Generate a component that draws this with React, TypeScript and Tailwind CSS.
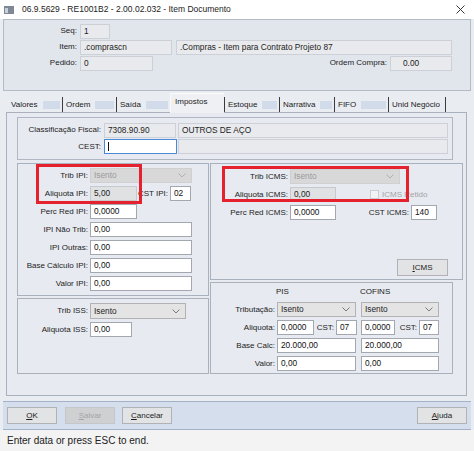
import React from "react";

type Kind = "white" | "ro" | "dis" | "focus";

const fieldKinds: Record<Kind, string> = {
  white: "bg-white border-[#a3a8b0] text-[#111]",
  ro: "bg-[#e9eaed] border-[#cdd1d7] text-[#222]",
  dis: "bg-[#e0e1e3] border-[#c6c9ce] text-[#222]",
  focus: "bg-white border-[#4a8ad4] text-[#111]",
};

function Field({
  v = "",
  kind = "white",
  className = "",
  children,
}: {
  v?: string;
  kind?: Kind;
  className?: string;
  children?: React.ReactNode;
}) {
  return (
    <div
      className={`h-[15px] border flex items-center pl-[3px] text-[8.3px] leading-none whitespace-nowrap overflow-hidden shrink-0 ${fieldKinds[kind]} ${className}`}
    >
      {v}
      {children}
    </div>
  );
}

function Chevron({ color }: { color: string }) {
  return (
    <svg width="8" height="5" viewBox="0 0 8 5" className="ml-auto mr-[5px] shrink-0">
      <path d="M0.5 0.5 L4 4 L7.5 0.5" fill="none" stroke={color} strokeWidth="1" />
    </svg>
  );
}

function Select({
  v,
  disabled = false,
  className = "",
}: {
  v: string;
  disabled?: boolean;
  className?: string;
}) {
  return (
    <div
      className={`h-[15px] border flex items-center pl-[3px] text-[8.3px] leading-none whitespace-nowrap shrink-0 ${
        disabled
          ? "bg-[#d8d8d9] border-[#d0d0d2] text-[#9a9a9a]"
          : "bg-[#e4e4e5] border-[#b2b2b4] text-[#1e1e1e]"
      } ${className}`}
    >
      {v}
      <Chevron color={disabled ? "#b0b0b0" : "#7a7a7a"} />
    </div>
  );
}

function Lbl({ t, className = "" }: { t: string; className?: string }) {
  return (
    <span
      className={`text-right text-[8px] leading-none whitespace-nowrap shrink-0 text-[#1c1c1c] ${className}`}
    >
      {t}
    </span>
  );
}

function Btn({
  first,
  rest,
  disabled = false,
  className = "",
}: {
  first: string;
  rest: string;
  disabled?: boolean;
  className?: string;
}) {
  return (
    <div
      className={`h-[17px] w-[50px] border flex items-center justify-center text-[8px] leading-none shrink-0 ${
        disabled
          ? "bg-[#cfd0d2] border-[#c4c6c9] text-[#a3a5a8]"
          : "bg-[#e2e3e5] border-[#b0b2b6] text-[#1c1c1c]"
      } ${className}`}
    >
      <span className="underline">{first}</span>
      {rest}
    </div>
  );
}

const tabs = [
  { t: "Valores", w: "w-[54px]", sep: false },
  { t: "Ordem", w: "w-[54px]", sep: true },
  { t: "Saída", w: "w-[54px]", sep: true },
  { t: "Impostos", w: "w-[54px]", sel: true },
  { t: "Estoque", w: "w-[55px]", sep: true },
  { t: "Narrativa", w: "w-[55px]", sep: true },
  { t: "FIFO", w: "w-[54px]", sep: true },
  { t: "Unid Negócio", w: "w-[58px]", sep: true, last: true },
];

export default function App() {
  return (
    <div className="relative w-[474px] h-[451px] overflow-hidden bg-[#e9ecf1] font-['Liberation_Sans',Arial,sans-serif] text-[#1b1b1b]">
      {/* Title bar */}
      <div className="h-[19px] bg-white flex items-center">
        <svg className="ml-[4px] shrink-0" width="10" height="8" viewBox="0 0 10 8">
          <rect x="0" y="0" width="10" height="8" fill="#7f8896" />
          <rect x="1" y="2" width="3" height="5" fill="#c9cfd8" />
        </svg>
        <span className="ml-[8px] text-[8.5px] leading-none text-[#222]">
          06.9.5629 - RE1001B2 - 2.00.02.032 - Item Documento
        </span>
        <svg className="ml-auto mr-[9px]" width="9" height="9" viewBox="0 0 9 9">
          <path d="M0.5 0.5L8.5 8.5M8.5 0.5L0.5 8.5" stroke="#3a3a3a" strokeWidth="1" />
        </svg>
      </div>

      {/* Header panel */}
      <div className="ml-[3px] w-[468px] h-[72px] border border-[#b4bbc6] bg-[#e1e5ec] pt-[4px] flex flex-col gap-[2px]">
        <div className="flex items-center h-[14px]">
          <Lbl t="Seq:" className="w-[73px]" />
          <Field kind="ro" v="1" className="ml-[3px] w-[30px] h-[14px]" />
        </div>
        <div className="flex items-center h-[14px]">
          <Lbl t="Item:" className="w-[73px]" />
          <Field kind="ro" v=".comprascn" className="ml-[3px] w-[92px] h-[14px]" />
          <Field kind="ro" v=".Compras - Item para Contrato Projeto 87" className="ml-[4px] w-[276px] h-[14px]" />
        </div>
        <div className="flex items-center h-[14px]">
          <Lbl t="Pedido:" className="w-[73px]" />
          <Field kind="ro" v="0" className="ml-[3px] w-[73px] h-[14px]" />
          <Lbl t="Ordem Compra:" className="w-[234px]" />
          <Field kind="ro" v="0.00" className="ml-[3px] w-[62px] h-[14px] pl-[12px]" />
        </div>
      </div>

      {/* Tabs */}
      <div className="mt-[2px] ml-[8px] flex items-start h-[20px] -mb-[1px] relative z-10">
        {tabs.map((tb) =>
          tb.sel ? (
            <div
              key={tb.t}
              className={`${tb.w} h-[20px] bg-[#eef0f3] border-l border-t border-[#fbfbfc] flex items-start pt-[4px] pl-[4px] text-[8px] leading-none shrink-0`}
            >
              <span>{tb.t}</span>
            </div>
          ) : (
            <div
              key={tb.t}
              className={`${tb.w} mt-[4px] h-[15px] flex items-center overflow-hidden whitespace-nowrap shrink-0 ${
                tb.sep ? "border-l border-[#3b3b3b]" : ""
              } ${tb.last ? "border-r" : ""}`}
            >
              <span className="pl-[3px] text-[8px] leading-none">{tb.t}</span>
              {!tb.last && <span className="flex-1 h-[8px] bg-[#d2dbea] ml-[5px] mr-[2px]" />}
            </div>
          )
        )}
      </div>

      {/* Tab panel */}
      <div className="ml-[6px] w-[461px] h-[284px] border border-[#a9b1bd] bg-[#e7eaf0]">
        {/* Classificacao */}
        <div className="ml-[10px] mt-[4px] w-[436px] h-[43px] border border-[#b0b7c2] pt-[5px] flex flex-col gap-[2px]">
          <div className="flex items-center h-[14px]">
            <Lbl t="Classificação Fiscal:" className="w-[83px]" />
            <Field kind="ro" v="7308.90.90" className="ml-[3px] w-[72px] h-[14px]" />
            <Field kind="ro" v="OUTROS DE AÇO" className="ml-[2px] w-[270px] h-[14px]" />
          </div>
          <div className="flex items-center h-[15px]">
            <Lbl t="CEST:" className="w-[83px]" />
            <Field kind="focus" className="ml-[3px] w-[73px]">
              <span className="w-[1px] h-[9px] bg-[#111]" />
            </Field>
            <Field kind="ro" className="ml-[1px] w-[270px]" />
          </div>
        </div>

        {/* Groups */}
        <div className="ml-[10px] mt-[3px] flex gap-[1px]">
          {/* Left column */}
          <div className="w-[192px] flex flex-col gap-[2px]">
            <div className="h-[133px] border border-[#a9b1bd] pt-[4px] flex flex-col gap-[3px]">
              <div className="flex items-center h-[15px]">
                <Lbl t="Trib IPI:" className="w-[70px]" />
                <Select v="Isento" disabled className="ml-[2px] w-[102px]" />
              </div>
              <div className="flex items-center h-[15px]">
                <Lbl t="Aliquota IPI:" className="w-[70px]" />
                <Field kind="dis" v="5,00" className="ml-[2px] w-[47px]" />
                <Lbl t="CST IPI:" className="w-[31px]" />
                <Field v="02" className="ml-[2px] w-[21px]" />
              </div>
              <div className="flex items-center h-[15px]">
                <Lbl t="Perc Red IPI:" className="w-[70px]" />
                <Field v="0,0000" className="ml-[2px] w-[47px]" />
              </div>
              <div className="flex items-center h-[15px]">
                <Lbl t="IPI Não Trib:" className="w-[70px]" />
                <Field v="0,00" className="ml-[2px] w-[102px]" />
              </div>
              <div className="flex items-center h-[15px]">
                <Lbl t="IPI Outras:" className="w-[70px]" />
                <Field v="0,00" className="ml-[2px] w-[102px]" />
              </div>
              <div className="flex items-center h-[15px]">
                <Lbl t="Base Cálculo IPI:" className="w-[70px]" />
                <Field v="0,00" className="ml-[2px] w-[102px]" />
              </div>
              <div className="flex items-center h-[15px]">
                <Lbl t="Valor IPI:" className="w-[70px]" />
                <Field v="0,00" className="ml-[2px] w-[102px]" />
              </div>
            </div>
            <div className="h-[76px] border border-[#a9b1bd] pt-[4px] flex flex-col gap-[3px]">
              <div className="flex items-center h-[16px]">
                <Lbl t="Trib ISS:" className="w-[70px]" />
                <Select v="Isento" className="ml-[2px] w-[96px] h-[16px]" />
              </div>
              <div className="flex items-center h-[15px]">
                <Lbl t="Aliquota ISS:" className="w-[70px]" />
                <Field v="0,00" className="ml-[2px] w-[42px]" />
              </div>
            </div>
          </div>

          {/* Right column */}
          <div className="w-[253px] flex flex-col gap-[2px]">
            <div className="h-[117px] border border-[#a9b1bd] pt-[5px] flex flex-col">
              <div className="flex items-center h-[15px]">
                <Lbl t="Trib ICMS:" className="w-[77px]" />
                <Select v="Isento" disabled className="ml-[2px] w-[110px]" />
              </div>
              <div className="flex items-center h-[15px] mt-[3px]">
                <Lbl t="Aliquota ICMS:" className="w-[77px]" />
                <Field kind="dis" v="0,00" className="ml-[2px] w-[46px]" />
                <span className="ml-[34px] w-[9px] h-[9px] border border-[#cbced3] bg-[#f2f3f5] shrink-0" />
                <span className="ml-[3px] text-[8px] leading-none text-[#a2a4a8] whitespace-nowrap">ICMS Retido</span>
              </div>
              <div className="flex items-center h-[15px] mt-[3px]">
                <Lbl t="Perc Red ICMS:" className="w-[77px]" />
                <Field v="0,0000" className="ml-[2px] w-[46px]" />
                <Lbl t="CST ICMS:" className="w-[73px]" />
                <Field v="140" className="ml-[2px] w-[26px]" />
              </div>
              <div className="flex justify-end mr-[14px] mt-[39px]">
                <Btn first="I" rest="CMS" className="w-[51px]" />
              </div>
            </div>
            <div className="w-[243px] h-[92px] border border-[#a9b1bd] pt-[3px] flex flex-col">
              <div className="flex items-center h-[12px] text-[8px] leading-none">
                <span className="ml-[65px] w-[84px]">PIS</span>
                <span>COFINS</span>
              </div>
              <div className="flex items-center h-[15px] mt-[4px]">
                <Lbl t="Tributação:" className="w-[64px]" />
                <Select v="Isento" className="ml-[2px] w-[79px]" />
                <Select v="Isento" className="ml-[5px] w-[78px]" />
              </div>
              <div className="flex items-center h-[15px] mt-[3px]">
                <Lbl t="Aliquota:" className="w-[64px]" />
                <Field v="0,0000" className="ml-[2px] w-[37px]" />
                <Lbl t="CST:" className="w-[20px]" />
                <Field v="07" className="ml-[2px] w-[21px]" />
                <Field v="0,0000" className="ml-[4px] w-[34px]" />
                <Lbl t="CST:" className="w-[22px]" />
                <Field v="07" className="ml-[2px] w-[20px]" />
              </div>
              <div className="flex items-center h-[15px] mt-[3px]">
                <Lbl t="Base Calc:" className="w-[64px]" />
                <Field v="20.000,00" className="ml-[2px] w-[79px]" />
                <Field v="20.000,00" className="ml-[5px] w-[78px]" />
              </div>
              <div className="flex items-center h-[15px] mt-[3px]">
                <Lbl t="Valor:" className="w-[64px]" />
                <Field v="0,00" className="ml-[2px] w-[79px]" />
                <Field v="0,00" className="ml-[5px] w-[78px]" />
              </div>
            </div>
          </div>
        </div>
      </div>

      {/* Button bar */}
      <div className="mt-[5px] ml-[3px] w-[468px] h-[29px] border-t border-b border-[#a3b2c9] bg-[#d4deed] flex items-start pt-[5px]">
        <Btn first="O" rest="K" className="ml-[4px]" />
        <Btn first="S" rest="alvar" disabled className="ml-[8px]" />
        <Btn first="C" rest="ancelar" className="ml-[7px]" />
        <Btn first="A" rest="juda" className="ml-auto mr-[4px]" />
      </div>

      {/* Status bar */}
      <div className="h-[21px] bg-[#f3f3f3] flex items-center pl-[7px] text-[10px] leading-none text-[#222]">
        Enter data or press ESC to end.
      </div>

      {/* Red highlight boxes */}
      <div className="absolute left-[36px] top-[164px] w-[106px] h-[40px] border-[3px] border-[#e4212c] pointer-events-none" />
      <div className="absolute left-[222px] top-[166px] w-[187px] h-[36px] border-[3px] border-[#e4212c] pointer-events-none" />
    </div>
  );
}
